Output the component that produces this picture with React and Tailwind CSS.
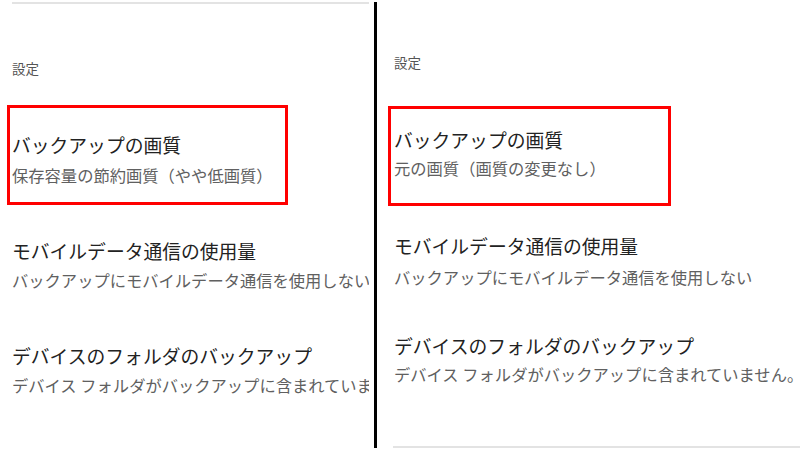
export default function App() {
  const font = { fontFamily: "'Noto Sans CJK JP', 'Noto Sans', sans-serif" };

  return (
    <div className="w-[800px] h-[450px] bg-white flex overflow-hidden" style={font}>
      {/* left screenshot */}
      <div className="w-[369px] shrink-0 overflow-hidden whitespace-nowrap">
        <div className="mt-[2px] ml-[12px] h-[2px] bg-[#e3e3e3]" />
        <div className="mt-[54px] pl-[12px] text-[13.5px] leading-[20px] text-[#555]">設定</div>
        <div className="mt-[27px] ml-[7px] w-[281px] h-[100px] border-[3px] border-[#ff0000] pl-[2px] pt-[25px]">
          <div className="text-[18.8px] leading-[24px] text-[#222]">バックアップの画質</div>
          <div className="mt-[7px] text-[16.3px] leading-[22px] text-[#606060]">保存容量の節約画質（やや低画質）</div>
        </div>
        <div className="pl-[12px]">
          <div className="mt-[34px] text-[18.8px] leading-[24px] text-[#222]">モバイルデータ通信の使用量</div>
          <div className="mt-[6px] text-[16.3px] leading-[22px] text-[#606060]">バックアップにモバイルデータ通信を使用しない</div>
          <div className="mt-[53px] text-[18.8px] leading-[24px] text-[#222]">デバイスのフォルダのバックアップ</div>
          <div className="mt-[6px] text-[16.3px] leading-[22px] text-[#606060]">デバイス フォルダがバックアップに含まれていません。</div>
        </div>
      </div>

      {/* divider */}
      <div className="ml-[5px] w-[3px] mt-[2px] h-[446px] bg-black shrink-0" />

      {/* right screenshot */}
      <div className="flex-1 flex flex-col overflow-hidden whitespace-nowrap">
        <div className="mt-[52px] pl-[17px] text-[13.5px] leading-[20px] text-[#555]">設定</div>
        <div className="mt-[34px] ml-[11px] w-[283px] h-[100px] border-[3px] border-[#ff0000] pl-[3px] pt-[19px]">
          <div className="text-[18.8px] leading-[24px] text-[#222]">バックアップの画質</div>
          <div className="mt-[5px] text-[16.3px] leading-[22px] text-[#606060]">元の画質（画質の変更なし）</div>
        </div>
        <div className="pl-[17px]">
          <div className="mt-[28px] text-[18.8px] leading-[24px] text-[#222]">モバイルデータ通信の使用量</div>
          <div className="mt-[8px] text-[16.3px] leading-[22px] text-[#606060]">バックアップにモバイルデータ通信を使用しない</div>
          <div className="mt-[46px] text-[18.8px] leading-[24px] text-[#222]">デバイスのフォルダのバックアップ</div>
          <div className="mt-[5px] text-[16.3px] leading-[22px] text-[#606060]">デバイス フォルダがバックアップに含まれていません。</div>
        </div>
        <div className="mt-auto mb-[2px] ml-[16px] h-[2px] bg-[#e3e3e3]" />
      </div>
    </div>
  );
}
